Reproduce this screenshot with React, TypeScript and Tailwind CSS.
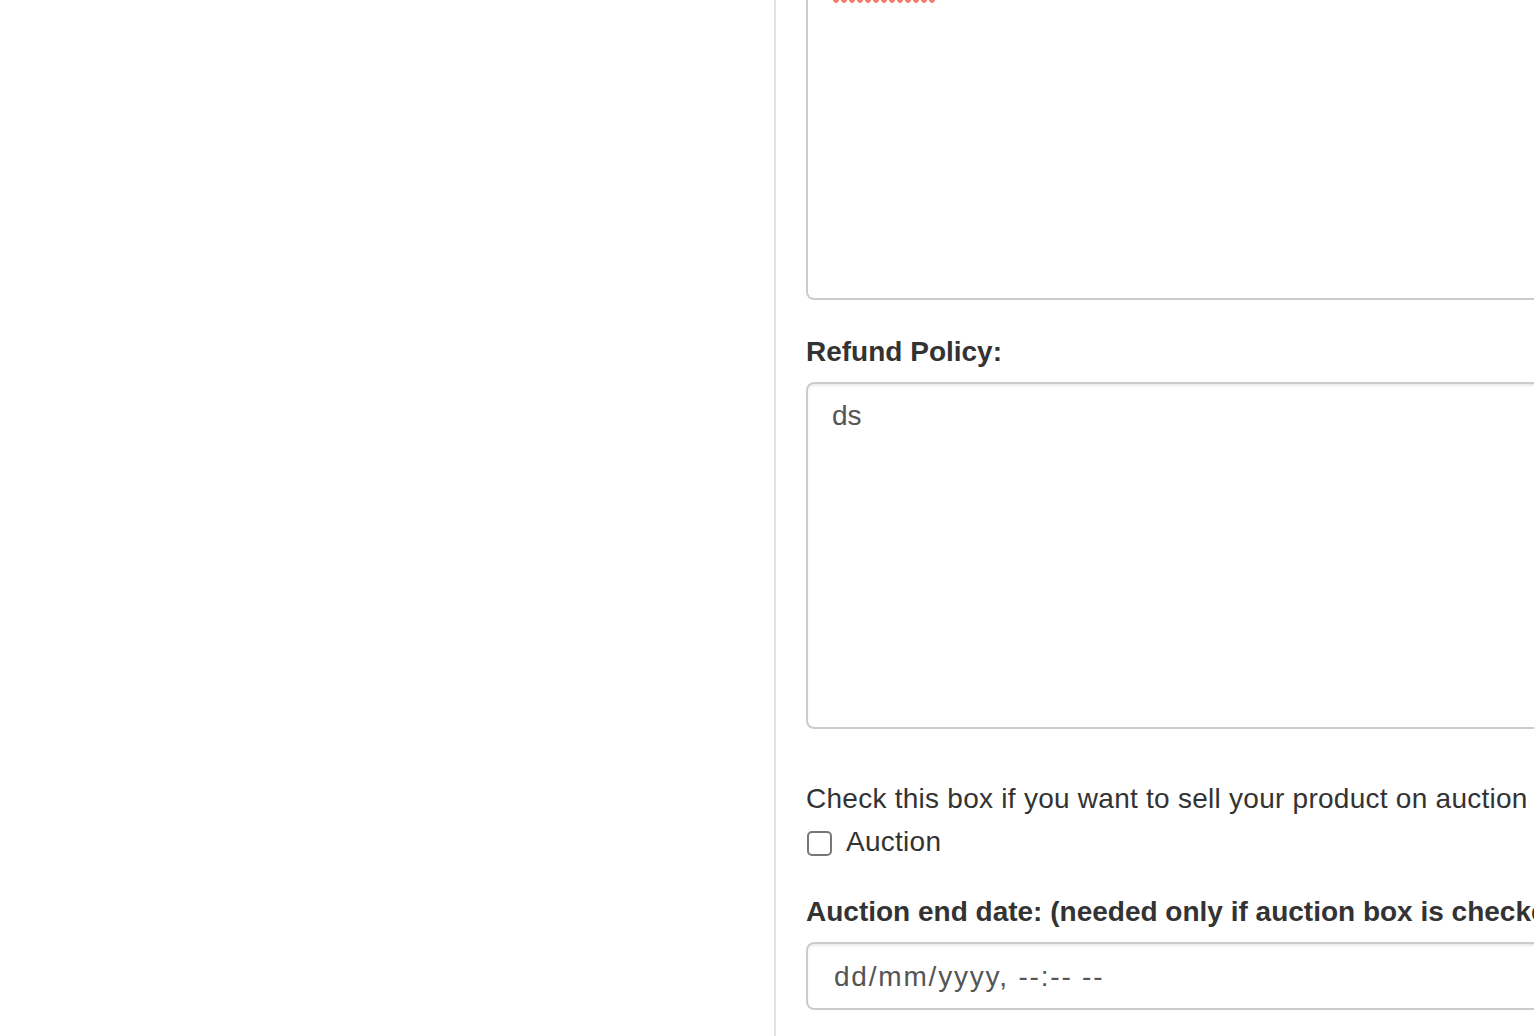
import React from "react";

const font = "font-['Liberation_Sans',Arial,Helvetica,sans-serif]";

export default function App() {
  return (
    <div className={`flex h-[1036px] w-[1534px] overflow-hidden bg-white text-[#333] ${font}`}>
      {/* Left column */}
      <div className="w-[776px] shrink-0 border-r-2 border-[#e2e2e2]" />

      {/* Form column */}
      <div className="w-[1100px] shrink-0 pl-[30px]">
        {/* Description textarea, scrolled so only its bottom shows */}
        <div className="h-[300px] rounded-b-[8px] border-x-2 border-b-2 border-[#cccccc] bg-white">
          <div className="ml-[24px] h-[4px] w-[104px] bg-[radial-gradient(circle_at_4px_0px,#f5806f_2.6px,transparent_3.1px)] bg-[length:8px_4px] bg-repeat-x" />
        </div>

        <div className="mt-[32px]">
          <label className="block text-[28px] font-bold leading-[40px]">Refund Policy:</label>
          <div className="mt-[10px] h-[347px] rounded-[8px] border-2 border-[#cccccc] px-[24px] py-[12px] text-[28px] leading-[40px] text-[#555] shadow-[inset_0_2px_2px_rgba(0,0,0,0.075)]">
            ds
          </div>
        </div>

        <div className="mt-[50px]">
          <p className="text-[28px] leading-[40px] tracking-[0.26px]">
            Check this box if you want to sell your product on auction
          </p>
          <div className="mt-[3px] flex h-[40px] items-center">
            <span className="ml-[1px] mt-[2px] h-[25px] w-[25px] rounded-[5px] border-2 border-[#777]" />
            <span className="ml-[14px] text-[28px] leading-[40px] tracking-[0.26px]">Auction</span>
          </div>
        </div>

        <div className="mt-[30px]">
          <label className="block text-[28px] font-bold leading-[40px]">
            Auction end date: (needed only if auction box is checked)
          </label>
          <div className="mt-[10px] flex h-[68px] items-center rounded-[8px] border-2 border-[#cccccc] pl-[26px] pt-[1px] text-[28px] tracking-[1.8px] text-[#555] shadow-[inset_0_2px_2px_rgba(0,0,0,0.075)]">
            dd/mm/yyyy, --:-- --
          </div>
        </div>
      </div>
    </div>
  );
}
